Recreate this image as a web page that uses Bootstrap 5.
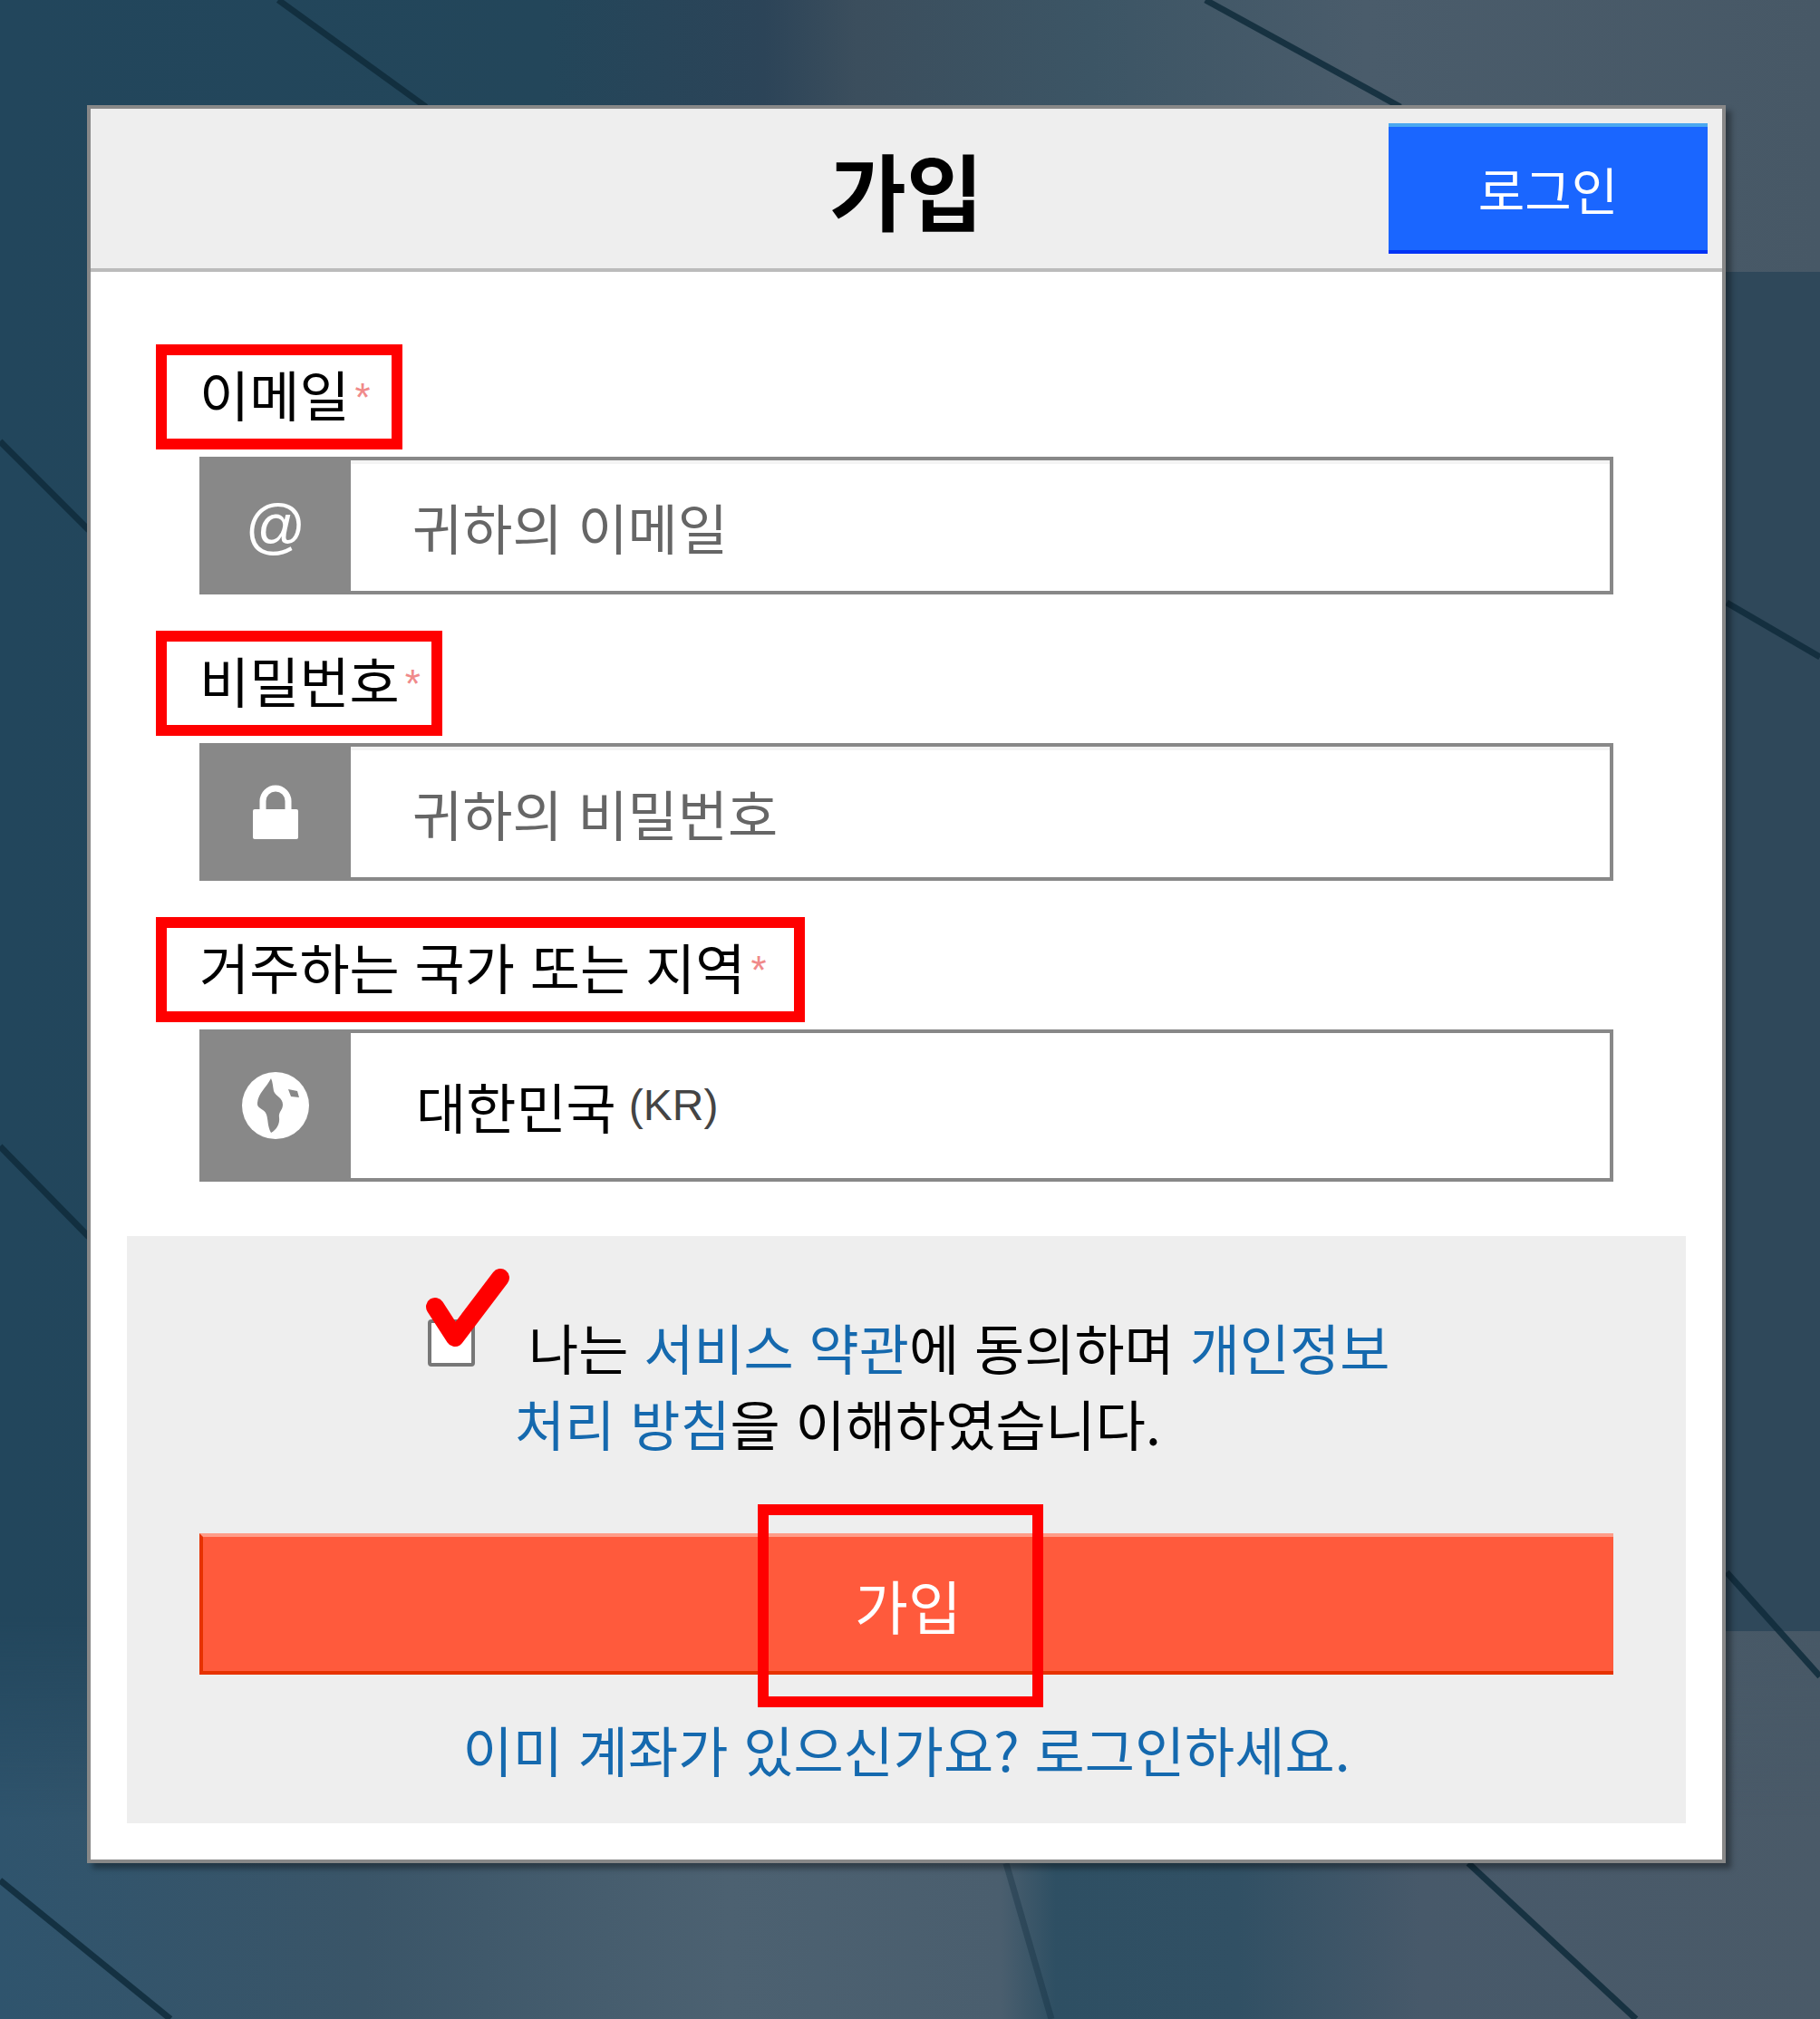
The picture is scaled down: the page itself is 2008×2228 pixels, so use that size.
<!doctype html>
<html lang="ko">

<head>
  <meta charset="utf-8">
  <meta name="viewport" content="width=device-width, initial-scale=1">
  <title>가입</title>

  <link href="https://cdn.jsdelivr.net/npm/bootstrap@5.3.0/dist/css/bootstrap.min.css" rel="stylesheet">

  <style>
    body {
      position: relative;
      padding: 116px 104px 172px 96px;
      background-color: #2c4a5e;
      font-family: "Noto Sans CJK KR", "Liberation Sans", sans-serif;
      font-size: 60px;
      line-height: 84px;
      color: #000;
    }

    .bg-art {
      position: absolute;
      top: 0;
      left: 0;
    }

    .signup-panel {
      position: relative;
      height: 1940px;
      background: #fff;
      border: 4px solid #888;
      box-shadow: 6px 6px 6px rgba(0, 0, 0, .35);
    }

    .signup-head {
      display: grid;
      grid-template-columns: 1fr auto 1fr;
      align-items: center;
      padding: 16px;
      background: #eee;
      border-bottom: 4px solid #bbb;
    }

    .signup-head h1 {
      margin: 0;
      font-size: 92px;
      font-weight: 700;
      line-height: 144px;
      font-family: inherit;
    }

    .btn-login {
      grid-column: 3;
      justify-self: end;
      width: 352px;
      height: 144px;
      padding: 0;
      font-size: 56px;
      color: #fff;
      background: #1a66ff;
      border: 0;
      border-top: 4px solid #4aa8f0;
      border-bottom: 4px solid #0033f5;
      border-radius: 0;
    }

    .signup-form {
      padding: 80px 72px 0;
    }

    .field-label {
      display: block;
      height: 116px;
      margin: 0 0 8px;
      padding-left: 36px;
      border: 12px solid #f00;
      line-height: 84px;
    }

    .label-email { width: 272px; }
    .label-pass { width: 316px; }
    .label-country { width: 716px; }

    .req {
      position: relative;
      top: -6px;
      margin-left: 6px;
      font-family: "Liberation Sans", sans-serif;
      font-size: 44px;
      color: #f08a8a;
    }

    .field-group {
      width: 1560px;
      margin: 0 0 40px 48px;
    }

    .field-group .input-group-text {
      justify-content: center;
      width: 168px;
      padding: 0;
      background: #888;
      border: 0;
      border-radius: 0;
      color: #fff;
    }

    .field-group .form-control {
      height: 152px;
      padding: 0 68px;
      border: 4px solid #888;
      border-left: 0;
      border-radius: 0;
      box-shadow: inset 0 4px 0 #f4f4f4;
      font-size: 60px;
      line-height: 84px;
      color: #000;
    }

    .field-group .form-control::placeholder {
      color: #666;
      opacity: 1;
    }

    .field-group .country-value {
      display: flex;
      align-items: center;
      height: 168px;
      padding: 0 72px;
      box-shadow: none;
    }

    .country-code {
      margin-left: 14px;
      font-family: "Liberation Sans", sans-serif;
      font-size: 48px;
      color: #444;
    }

    .at-sign {
      font-family: "Liberation Sans", sans-serif;
      font-size: 66px;
      line-height: 1;
    }

    .agree-box {
      margin: 60px 40px 40px;
      padding: 80px 80px 40px;
      height: 648px;
      background: #eee;
    }

    .agree-line {
      position: relative;
      min-height: 0;
      margin: 0 0 80px;
      padding-left: 333px;
      text-indent: 15px;
    }

    .agree-line .form-check-input {
      float: left;
      width: 52px;
      height: 52px;
      margin: 12px 0 0 -81px;
      background-color: #fff;
      border: 4px solid #777;
      border-radius: 4px;
    }

    .agree-line a,
    .have-account a {
      color: #1569ae;
      text-decoration: none;
    }

    .check-mark {
      position: absolute;
      top: -44px;
      left: 246px;
    }

    .submit-wrap {
      position: relative;
    }

    .btn-submit {
      display: block;
      width: 100%;
      height: 156px;
      padding: 0;
      font-size: 64px;
      color: #fff;
      background: #ff5a3c;
      border: 0;
      border-top: 4px solid #ff9c88;
      border-bottom: 4px solid #e63200;
      border-left: 4px solid #e63200;
      border-radius: 0;
    }

    .submit-hilite {
      position: absolute;
      top: -32px;
      left: 616px;
      width: 315px;
      height: 224px;
      border: 12px solid #f00;
    }

    .have-account {
      margin: 40px -80px 0;
      text-align: center;
    }
  </style>
</head>

<body>
  <!-- painted backdrop behind the panel -->
  <svg class="bg-art" width="2008" height="2228" viewBox="0 0 2008 2228">
    <defs>
      <linearGradient id="topTone" x1="0" x2="1" y1="0" y2="0">
        <stop offset="0" stop-color="#22465c" />
        <stop offset=".3" stop-color="#23465a" />
        <stop offset=".42" stop-color="#2c4458" />
        <stop offset=".47" stop-color="#3b4e5d" />
        <stop offset=".6" stop-color="#3c5565" />
        <stop offset=".75" stop-color="#4a5c6b" />
        <stop offset="1" stop-color="#475866" />
      </linearGradient>
      <linearGradient id="lowTone" x1="0" x2="1" y1="0" y2="0">
        <stop offset="0" stop-color="#2f546d" />
        <stop offset=".2" stop-color="#3a5568" />
        <stop offset=".4" stop-color="#4c6171" />
        <stop offset=".55" stop-color="#4a5e6e" />
        <stop offset=".58" stop-color="#2e4f63" />
        <stop offset=".68" stop-color="#315064" />
        <stop offset=".78" stop-color="#47596a" />
        <stop offset="1" stop-color="#4a5a68" />
      </linearGradient>
      <linearGradient id="sideFade" x1="0" x2="0" y1="0" y2="1">
        <stop offset="0" stop-color="#fff" />
        <stop offset=".8" stop-color="#fff" />
        <stop offset=".9" stop-color="#000" />
      </linearGradient>
      <mask id="topMask">
        <rect width="2008" height="2228" fill="url(#sideFade)" />
      </mask>
    </defs>
    <rect width="2008" height="2228" fill="url(#lowTone)" />
    <rect width="2008" height="2228" fill="url(#topTone)" mask="url(#topMask)" />
    <rect x="1904" y="300" width="104" height="1500" fill="#2f485a" />
    <g stroke="#0f2b3b" stroke-width="7" fill="none" opacity=".85">
      <path d="M307 0 470 118" />
      <path d="M1330 0 1545 118" />
      <path d="M0 487 98 585" />
      <path d="M0 1265 98 1365" />
      <path d="M0 2075 188 2228" />
      <path d="M1620 2056 1805 2228" />
      <path d="M1905 665 2008 725" />
      <path d="M1905 1735 2008 1850" />
      <path d="M1110 2056 1160 2228" opacity=".4" />
    </g>
  </svg>

  <div class="signup-panel">
    <div class="signup-head">
      <h1 class="text-center" style="grid-column: 2">가입</h1>
      <button type="button" class="btn btn-login">로그인</button>
    </div>

    <form class="signup-form">
      <label class="field-label label-email" for="email">이메일<span class="req">*</span></label>
      <div class="input-group field-group">
        <span class="input-group-text"><span class="at-sign">@</span></span>
        <input type="email" class="form-control" id="email" placeholder="귀하의 이메일">
      </div>

      <label class="field-label label-pass" for="password">비밀번호<span class="req">*</span></label>
      <div class="input-group field-group">
        <span class="input-group-text">
          <svg width="52" height="60" viewBox="0 0 52 60">
            <path d="M12 28V18a14 14 0 0 1 28 0v10" fill="none" stroke="#fff" stroke-width="7" />
            <rect x="1" y="27" width="50" height="33" rx="2" fill="#fff" />
          </svg>
        </span>
        <input type="password" class="form-control" id="password" placeholder="귀하의 비밀번호">
      </div>

      <label class="field-label label-country">거주하는 국가 또는 지역<span class="req">*</span></label>
      <div class="input-group field-group">
        <span class="input-group-text">
          <svg width="76" height="76" viewBox="0 0 76 76">
            <circle cx="38" cy="38" r="37" fill="#fff" />
            <path d="M33 8c-5 10-14 16-15 27-1 7 8 6 10 13 2 6 1 13 5 20 6-3 10-10 9-17-1-6 4-8 4-14 0-8-8-9-10-15-1-5-1-10-3-14z" fill="#888" />
            <path d="M52 20l10 2 2 7-9-1z" fill="#888" />
          </svg>
        </span>
        <div class="form-control country-value">대한민국<span class="country-code">(KR)</span></div>
      </div>
    </form>

    <div class="agree-box">
      <div class="form-check agree-line">
        <input class="form-check-input" type="checkbox" id="agree">
        <label class="form-check-label" for="agree">나는 <a href="#">서비스 약관</a>에 동의하며 <a href="#">개인정보<br>처리 방침</a>을 이해하였습니다.</label>
        <svg class="check-mark" width="104" height="96" viewBox="0 0 104 96">
          <path d="M14 42 36 76 86 10" fill="none" stroke="#f00" stroke-width="20" stroke-linecap="round" stroke-linejoin="round" />
        </svg>
      </div>

      <div class="submit-wrap">
        <button type="submit" class="btn btn-submit">가입</button>
        <div class="submit-hilite"></div>
      </div>

      <p class="have-account"><a href="#">이미 계좌가 있으신가요? 로그인하세요.</a></p>
    </div>
  </div>

  <script src="https://cdn.jsdelivr.net/npm/bootstrap@5.3.0/dist/js/bootstrap.bundle.min.js"></script>
</body>

</html>
